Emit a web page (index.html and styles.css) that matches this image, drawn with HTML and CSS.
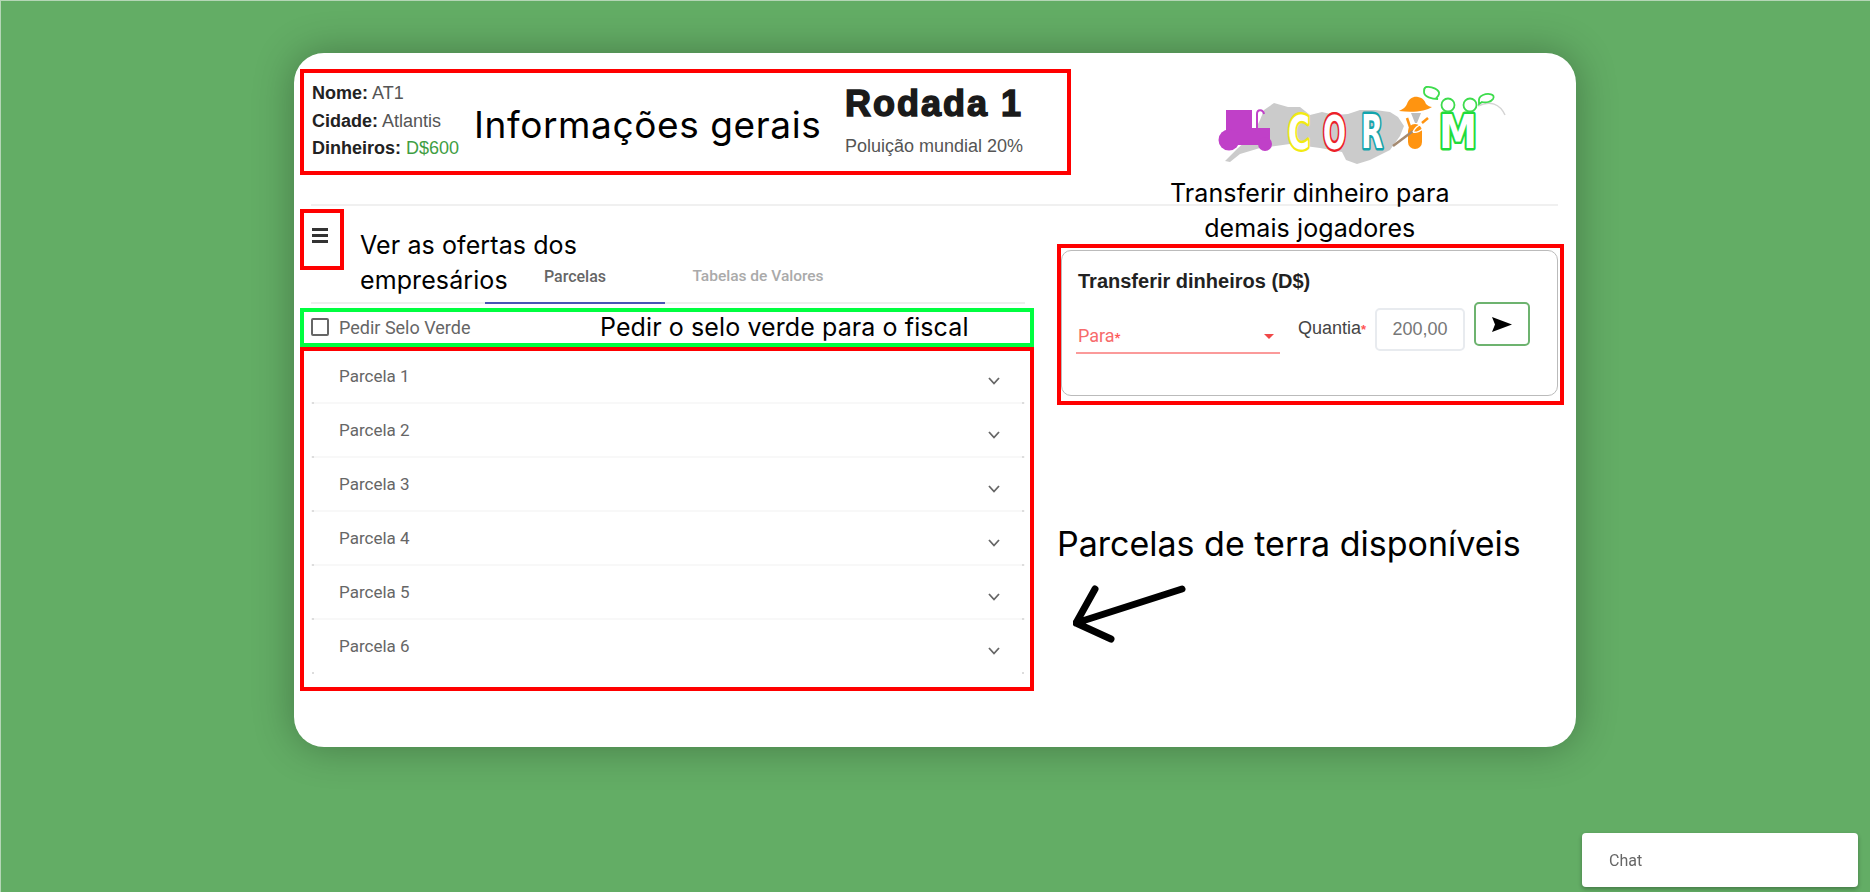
FILE: index.html
```html
<!DOCTYPE html>
<html lang="pt-BR">
<head>
  <meta charset="UTF-8">
  <meta name="viewport" content="width=device-width, initial-scale=1.0">
  <title>Corim</title>
  <link rel="stylesheet" href="styles.css">
</head>
<body>

<div class="card">
  <header class="top">
    <div class="info">
      <p><b>Nome:</b> AT1</p>
      <p><b>Cidade:</b> Atlantis</p>
      <p><b>Dinheiros:</b> <span class="money">D$600</span></p>
    </div>
    <div class="round">
      <h1>Rodada 1</h1>
      <p>Poluição mundial 20%</p>
    </div>
    <svg class="logo" viewBox="0 0 340 110" width="340" height="110" aria-label="Corim">
      <path class="logo-map" d="M25 91 L38 78 L52 66 L60 50 L64 40 L74 33 L88 37 L100 37 L110 45 L122 42 L135 45 L148 44 L160 40 L175 40 L190 42 L198 47 L204 56 L200 66 L190 80 L170 90 L157 94 L146 90 L142 82 L120 78 L90 74 L60 78 L40 84 L30 92 Z"/>
      <path class="logo-line" d="M278 36 C290 30 300 34 305 45"/>
      <g class="tractor">
        <rect x="26" y="40" width="26" height="24"/>
        <rect x="26" y="58" width="44" height="17"/>
        <circle cx="29" cy="70" r="10.500"/>
        <circle cx="65" cy="74" r="7"/>
        <path class="tractor-pipe" d="M57 60 V44 C57 39 63 39 64 44"/>
      </g>
      <text class="letter letter-c" x="88" y="79" textLength="22" lengthAdjust="spacingAndGlyphs">C</text>
      <text class="letter letter-o" x="123" y="79" textLength="23" lengthAdjust="spacingAndGlyphs">O</text>
      <text class="letter letter-r" x="161" y="78" textLength="22" lengthAdjust="spacingAndGlyphs">R</text>
      <g class="farmer">
        <path d="M199 41 C203 39 206 37 207 34 C209 28 214 26 218 27 C223 28 225 31 226 34 C228 36 230 37 232 37 C226 41 214 43 199 41 Z"/>
        <path class="farmer-neck" d="M211 43 H221 L217 53 H215 Z"/>
        <rect x="208" y="54" width="14" height="25" rx="7"/>
        <path class="farmer-arm" d="M207 48 L211 60"/>
        <path class="farmer-fork" d="M193 76 L213 61"/>
        <path class="farmer-swirl" d="M213 62 C217 54 226 52 224 57 C222 61 216 63 213 62"/>
        <path class="farmer-arm" d="M222 53 L228 48"/>
      </g>
      <text class="letter letter-m" x="239" y="78" textLength="38" lengthAdjust="spacingAndGlyphs">M</text>
      <g class="people">
        <circle cx="248" cy="35" r="6.500"/>
        <circle cx="270" cy="35" r="6.500"/>
        <path d="M226 17 C232 16 240 20 239 24 C238 28 234 28 238 29 C232 29 224 27 224 22 C224 19 224 18 226 17 Z"/>
        <path d="M283 25 C288 23 296 24 293 29 C291 32 286 33 282 32 L279 34 C279 30 278 27 283 25 Z"/>
      </g>
    </svg>
  </header>

  <div class="main">
    <section class="plots">
      <div class="tabbar">
        <div class="menu"><span></span><span></span><span></span></div>
        <div class="tab tab-active">Parcelas</div>
        <div class="tab tab-values">Tabelas de Valores</div>
      </div>
      <label class="seal"><span class="checkbox"></span>Pedir Selo Verde</label>
      <div class="plot">Parcela 1<svg viewBox="0 0 12 8" width="12" height="8"><path d="M1 1 L6 6.500 L11 1"/></svg></div>
      <div class="plot">Parcela 2<svg viewBox="0 0 12 8" width="12" height="8"><path d="M1 1 L6 6.500 L11 1"/></svg></div>
      <div class="plot">Parcela 3<svg viewBox="0 0 12 8" width="12" height="8"><path d="M1 1 L6 6.500 L11 1"/></svg></div>
      <div class="plot">Parcela 4<svg viewBox="0 0 12 8" width="12" height="8"><path d="M1 1 L6 6.500 L11 1"/></svg></div>
      <div class="plot">Parcela 5<svg viewBox="0 0 12 8" width="12" height="8"><path d="M1 1 L6 6.500 L11 1"/></svg></div>
      <div class="plot">Parcela 6<svg viewBox="0 0 12 8" width="12" height="8"><path d="M1 1 L6 6.500 L11 1"/></svg></div>
    </section>

    <section class="transfer">
      <h2>Transferir dinheiros (D$)</h2>
      <div class="transfer-form">
        <div class="select-to">
          <span>Para<i>*</i></span>
          <span class="caret"></span>
        </div>
        <label class="amount-label" for="amount">Quantia<i>*</i></label>
        <input class="amount" id="amount" type="text" value="200,00">
        <button class="send" type="button" aria-label="Enviar">
          <svg viewBox="0 0 20 15" width="20" height="15"><path d="M0 0 L20 7.500 L0 15 L3 7.500 Z"/></svg>
        </button>
      </div>
    </section>
  </div>

  <!-- anotacoes por cima da tela -->
  <div class="note-box box-info"></div>
  <div class="note-box box-menu"></div>
  <div class="note-box box-seal"></div>
  <div class="note-box box-plots"></div>
  <div class="note-box box-transfer"></div>
  <p class="note note-info">Informações gerais</p>
  <p class="note note-offers">Ver as ofertas dos<br>empresários</p>
  <p class="note note-seal">Pedir o selo verde para o fiscal</p>
  <p class="note note-transfer">Transferir dinheiro para<br>demais jogadores</p>
  <p class="note note-plots">Parcelas de terra disponíveis</p>
  <svg class="note-arrow" viewBox="0 0 120 60" width="120" height="60">
    <path d="M109 5 L3 39 M22 5 L3 39 L38 55"/>
  </svg>
</div>

<div class="chat">Chat</div>

</body>
</html>
```

FILE: styles.css
```css
body {
  margin: 0;
  height: 892px;
  overflow: hidden;
  background-color: #63ad65;
  box-shadow: inset 1px 1px 0 #b5d6b6;
  font-family: "Liberation Sans", Arial, sans-serif;
  color: #333;
}
p, h1, h2 {
  margin: 0;
}

.card {
  position: relative;
  box-sizing: border-box;
  width: 1282px;
  height: 694px;
  margin: 53px auto 0;
  padding: 25px 18px 0 17px;
  background-color: white;
  border-radius: 30px;
  box-shadow: 0 0 40px rgba(0, 0, 0, 0.3);
}

/* topo */
.top {
  display: flex;
  height: 126px;
  border-bottom: 2px solid #f0f0f0;
}
.info {
  width: 533px;
  margin-left: 1px;
  padding-top: 2px;
  font-size: 18px;
  line-height: 27.5px;
  color: #555;
}
.info b {
  color: #222;
}
.money {
  color: #3f9e43;
}
.round {
  width: 180px;
}
.round h1 {
  margin-top: 6px;
  font-size: 36px;
  line-height: 40px;
  letter-spacing: 2px;
  color: #1a1a1a;
  -webkit-text-stroke: 1.5px #1a1a1a;
}
.round p {
  margin-top: 9px;
  font-size: 18px;
  line-height: 27px;
  color: #555;
}
.logo {
  flex: none;
  margin: -8px 0 0 175px;
}
.logo-map {
  fill: #cbcbcb;
}
.logo-line {
  fill: none;
  stroke: #d4d4d4;
  stroke-width: 1.5;
}
.tractor {
  fill: #c040c8;
}
.tractor-pipe {
  fill: none;
  stroke: #c040c8;
  stroke-width: 2;
}
.letter {
  font-family: "DejaVu Sans", sans-serif;
  font-size: 46px;
  font-weight: bold;
  fill: white;
  stroke-width: 5;
  stroke-linejoin: round;
  paint-order: stroke;
}
.letter-c { stroke: #f2ea12; }
.letter-o { stroke: #ec2028; }
.letter-r { stroke: #14a4ac; }
.letter-m { stroke: #1fdc3a; }
.farmer {
  fill: #ff9410;
}
.farmer-neck {
  fill: #bdbdbd;
}
.farmer-arm {
  fill: none;
  stroke: #ff9410;
  stroke-width: 2.5;
}
.farmer-fork {
  fill: none;
  stroke: #a58a70;
  stroke-width: 2.5;
}
.farmer-swirl {
  fill: none;
  stroke: white;
  stroke-width: 1.5;
}
.people {
  fill: none;
  stroke: #3ddc4c;
  stroke-width: 1.8;
}

/* colunas */
.main {
  display: grid;
  grid-template-columns: 714px 497px;
  column-gap: 36px;
}

.tabbar {
  display: flex;
  align-items: flex-end;
  height: 96px;
  border-bottom: 2px solid #eee;
}
.menu {
  align-self: flex-start;
  display: flex;
  flex-direction: column;
  gap: 3px;
  width: 16px;
  margin: 22px 157px 0 1px;
}
.menu span {
  height: 3px;
  background-color: #333;
}
.tab {
  box-sizing: border-box;
  width: 180px;
  height: 54px;
  margin-bottom: -2px;
  padding-top: 17px;
  text-align: center;
  font-family: Roboto, sans-serif;
  font-size: 16px;
  font-weight: 500;
  color: #aaa;
}
.tab-values {
  width: 186px;
  font-size: 15.5px;
}
.tab-active {
  color: #666;
  border-bottom: 2px solid #4a55b5;
}
.seal {
  display: flex;
  align-items: center;
  gap: 10px;
  height: 46px;
  font-family: Roboto, sans-serif;
  font-size: 18px;
  color: #666;
}
.checkbox {
  box-sizing: border-box;
  width: 18px;
  height: 18px;
  border: 2px solid #666;
  border-radius: 2px;
}
.plot {
  position: relative;
  box-sizing: border-box;
  display: flex;
  justify-content: space-between;
  align-items: center;
  height: 54px;
  padding: 0 25px 0 28px;
  border-bottom: 2px solid #f8f8f8;
  font-family: Roboto, sans-serif;
  font-size: 17px;
  color: #666;
}
.plot:last-child {
  border-bottom-color: transparent;
}
.plot svg {
  margin-top: 10px;
  fill: none;
  stroke: #666;
  stroke-width: 1.8;
}
.plot::before, .plot::after {
  content: "";
  position: absolute;
  bottom: -2px;
  width: 2px;
  height: 2px;
  background-color: #ddd;
}
.plot::before {
  left: 1px;
}
.plot::after {
  right: 1px;
}

.transfer {
  box-sizing: border-box;
  height: 146px;
  margin-top: 44px;
  padding: 18px 16px;
  border: 1.5px solid #bbb;
  border-radius: 10px;
}
.transfer h2 {
  font-size: 20px;
  line-height: 24px;
  color: #222;
}
.transfer-form {
  display: flex;
  align-items: flex-start;
  margin: 9px 0 0 -2px;
}
.select-to {
  box-sizing: border-box;
  display: flex;
  justify-content: space-between;
  align-items: center;
  width: 204px;
  height: 32px;
  margin-top: 20px;
  padding: 0 6px 4px 2px;
  border-bottom: 2px solid #fb9a9a;
  font-family: Roboto, sans-serif;
  font-size: 18px;
  color: #f76b6b;
}
.select-to i, .amount-label i {
  font-style: normal;
  font-size: 13px;
  font-weight: bold;
  color: #f55;
}
.caret {
  width: 0;
  height: 0;
  margin-top: 3px;
  border-left: 5px solid transparent;
  border-right: 5px solid transparent;
  border-top: 5px solid #f04848;
}
.amount-label {
  width: 77px;
  margin: 15px 0 0 18px;
  font-size: 18px;
  line-height: 22px;
  color: #444;
}
.amount {
  box-sizing: border-box;
  width: 90px;
  height: 43px;
  margin-top: 6px;
  padding: 0;
  border: 2px solid #e8ebef;
  border-radius: 5px;
  text-align: center;
  font-family: "Liberation Sans", Arial, sans-serif;
  font-size: 18px;
  color: #777;
}
.send {
  display: flex;
  align-items: center;
  justify-content: center;
  width: 56px;
  height: 44px;
  margin-left: 9px;
  padding: 0;
  background-color: white;
  border: 2px solid #6db36f;
  border-radius: 5px;
}

/* anotacoes */
.note-box {
  position: absolute;
  box-sizing: border-box;
  border: 4px solid #ff0000;
}
.box-info {
  left: 6px;
  top: 16px;
  width: 771px;
  height: 106px;
}
.box-menu {
  left: 6px;
  top: 156px;
  width: 44px;
  height: 61px;
}
.box-seal {
  left: 6px;
  top: 255px;
  width: 734px;
  height: 39px;
  border-color: #00ff40;
}
.box-plots {
  left: 6px;
  top: 294px;
  width: 734px;
  height: 344px;
}
.box-transfer {
  left: 763px;
  top: 191px;
  width: 507px;
  height: 161px;
}
.note {
  position: absolute;
  font-family: Inter, sans-serif;
  font-size: 25px;
  line-height: 35px;
  letter-spacing: 0.1px;
  color: black;
  white-space: nowrap;
}
.note-info {
  left: 180px;
  top: 52px;
  font-size: 37px;
  line-height: 40px;
  letter-spacing: 0.6px;
}
.note-offers {
  left: 66px;
  top: 175px;
}
.note-seal {
  left: 306px;
  top: 257px;
}
.note-transfer {
  left: 876px;
  top: 123px;
  text-align: center;
}
.note-plots {
  left: 763px;
  top: 471px;
  font-size: 34px;
  line-height: 40px;
  letter-spacing: 0;
}
.note-arrow {
  position: absolute;
  left: 779px;
  top: 531px;
  fill: none;
  stroke: black;
  stroke-width: 7;
  stroke-linecap: round;
  stroke-linejoin: round;
}

.chat {
  position: fixed;
  right: 12px;
  bottom: 5px;
  box-sizing: border-box;
  width: 276px;
  height: 54px;
  padding: 0 27px;
  background-color: white;
  border-radius: 4px;
  box-shadow: 0 2px 4px rgba(0, 0, 0, 0.3);
  font-family: Roboto, sans-serif;
  font-size: 16px;
  line-height: 56px;
  color: #666;
}
```
